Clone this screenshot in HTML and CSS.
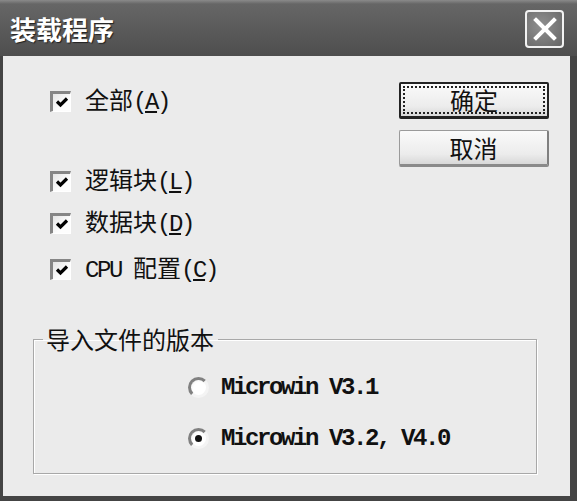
FILE: index.html
```html
<!DOCTYPE html>
<html lang="zh-CN">
<head>
<meta charset="utf-8">
<title>装载程序</title>
<link rel="stylesheet" href="styles.css">
</head>
<body>
<div class="window">
  <div class="titlebar">
    <div class="title">装载程序</div>
    <div class="close">
      <svg width="24" height="24" viewBox="0 0 24 24"><path d="M3 3 L21 21 M21 3 L3 21" stroke="#fff" stroke-width="4" stroke-linecap="square"/></svg>
    </div>
  </div>
  <div class="client">
    <div class="top">
      <div class="checks">
        <label class="check r1"><span class="box"><svg width="14" height="14" viewBox="0 0 14 14"><path d="M2 6.5 L5.5 10 L12 3.5" stroke="#000" stroke-width="3.2" fill="none"/></svg></span><span class="txt">全部<span class="lat">(<u>A</u>)</span></span></label>
        <label class="check r2"><span class="box"><svg width="14" height="14" viewBox="0 0 14 14"><path d="M2 6.5 L5.5 10 L12 3.5" stroke="#000" stroke-width="3.2" fill="none"/></svg></span><span class="txt">逻辑块<span class="lat">(<u>L</u>)</span></span></label>
        <label class="check r3"><span class="box"><svg width="14" height="14" viewBox="0 0 14 14"><path d="M2 6.5 L5.5 10 L12 3.5" stroke="#000" stroke-width="3.2" fill="none"/></svg></span><span class="txt">数据块<span class="lat">(<u>D</u>)</span></span></label>
        <label class="check r4"><span class="box"><svg width="14" height="14" viewBox="0 0 14 14"><path d="M2 6.5 L5.5 10 L12 3.5" stroke="#000" stroke-width="3.2" fill="none"/></svg></span><span class="txt"><span class="lat">CPU </span>配置<span class="lat">(<u>C</u>)</span></span></label>
      </div>
      <div class="buttons">
        <button class="btn default"><span class="focus">确定</span></button>
        <button class="btn">取消</button>
      </div>
    </div>
    <fieldset class="group">
      <legend>导入文件的版本</legend>
      <div class="options">
        <div class="radio"><span class="circle"></span><span class="lat">Microwin V3.1</span></div>
        <div class="radio"><span class="circle on"></span><span class="lat">Microwin V3.2, V4.0</span></div>
      </div>
    </fieldset>
  </div>
</div>
</body>
</html>
```
FILE: styles.css
```css
html, body {
  margin: 0;
  padding: 0;
  background: #3a3a3a;
}
.window {
  width: 577px;
  height: 501px;
  box-sizing: border-box;
  background: #444;
  display: flex;
  flex-direction: column;
  font-family: "Noto Sans CJK SC", "Liberation Sans", sans-serif;
}
.titlebar {
  height: 56px;
  flex: none;
  box-sizing: border-box;
  background: linear-gradient(to bottom, #8a8a8a 0px, #666 4px, #5a5a5a 30px, #4e4e4e 56px);
  display: flex;
  align-items: center;
  justify-content: space-between;
  padding: 2px 13px 0 10px;
}
.title {
  color: #fff;
  font-size: 26px;
  font-weight: 700;
  line-height: 30px;
  text-shadow: 1px 1px 1px #222;
}
.close {
  width: 39px;
  height: 38px;
  box-sizing: border-box;
  border: 2px solid #f2f2f2;
  border-radius: 4px;
  background: radial-gradient(circle at 40% 40%, #909090, #666);
  display: flex;
  align-items: center;
  justify-content: center;
}
.client {
  flex: 1;
  margin: 0 7px 5px 3px;
  background: #ebebeb;
  display: flex;
  flex-direction: column;
  padding: 0 33px 22px 30px;
}
.top {
  display: flex;
  justify-content: space-between;
  height: 268px;
  flex: none;
}
.checks {
  display: flex;
  flex-direction: column;
  padding-left: 17px;
  padding-top: 30px;
}
.check {
  display: flex;
  align-items: center;
  height: 30px;
  color: #111;
}
.r2 { margin-top: 50px; }
.r3 { margin-top: 12px; }
.r4 { margin-top: 16px; }
.box {
  flex: none;
  width: 21px;
  height: 21px;
  box-sizing: border-box;
  border-top: 3px solid #858585;
  border-left: 3px solid #858585;
  border-right: 1px solid #fff;
  border-bottom: 1px solid #fff;
  background: linear-gradient(135deg, #e4e4e4, #fdfdfd 60%);
  display: flex;
  align-items: center;
  justify-content: center;
  margin-right: 14px;
}
.txt {
  font-size: 24px;
  line-height: 30px;
}
.lat {
  font-family: "Liberation Mono", monospace;
  font-size: 24px;
  letter-spacing: -2.4px;
}
u {
  text-underline-offset: 2px;
}
.buttons {
  display: flex;
  flex-direction: column;
  gap: 11px;
  padding-top: 26px;
  margin-right: -12px;
}
.btn {
  width: 150px;
  height: 37px;
  padding: 0;
  box-sizing: border-box;
  background: linear-gradient(to bottom, #fafafa, #ececec 70%, #d8d8d8);
  border: 1px solid #9a9a9a;
  border-right: 2px solid #808080;
  border-bottom: 3px solid #8a8a8a;
  border-radius: 2px;
  font-family: "Noto Sans CJK SC", sans-serif;
  font-size: 24px;
  line-height: 30px;
  color: #111;
  display: flex;
  align-items: center;
  justify-content: center;
}
.btn.default {
  border: 2px solid #222;
  border-bottom: 3px solid #222;
  padding: 2px;
}
.focus {
  flex: 1;
  align-self: stretch;
  border: 2px dotted #222;
  display: flex;
  align-items: center;
  justify-content: center;
}
.group {
  margin: 0;
  flex: 1;
  border: 1px solid #a8a8a8;
  box-shadow: inset 1px 1px 0 #fff, 1px 1px 0 #fff;
  padding: 0;
}
.group legend {
  font-size: 24px;
  line-height: 30px;
  padding: 0 4px 0 3px;
  margin-left: 9px;
  color: #111;
}
.options {
  display: flex;
  flex-direction: column;
  gap: 21px;
  padding: 18px 0 0 154px;
}
.radio {
  display: flex;
  align-items: center;
  height: 30px;
  color: #111;
}
.radio .lat {
  font-weight: 700;
}
.circle {
  flex: none;
  width: 21px;
  height: 21px;
  box-sizing: border-box;
  border-radius: 50%;
  background: radial-gradient(circle at 60% 60%, #fff 50%, #ececec);
  border: 3px solid #f4f4f4;
  border-top-color: #808080;
  border-left-color: #808080;
  margin-right: 12px;
  position: relative;
}
.circle.on::after {
  content: "";
  position: absolute;
  left: 4px;
  top: 4px;
  width: 7px;
  height: 7px;
  border-radius: 50%;
  background: #111;
}
```
